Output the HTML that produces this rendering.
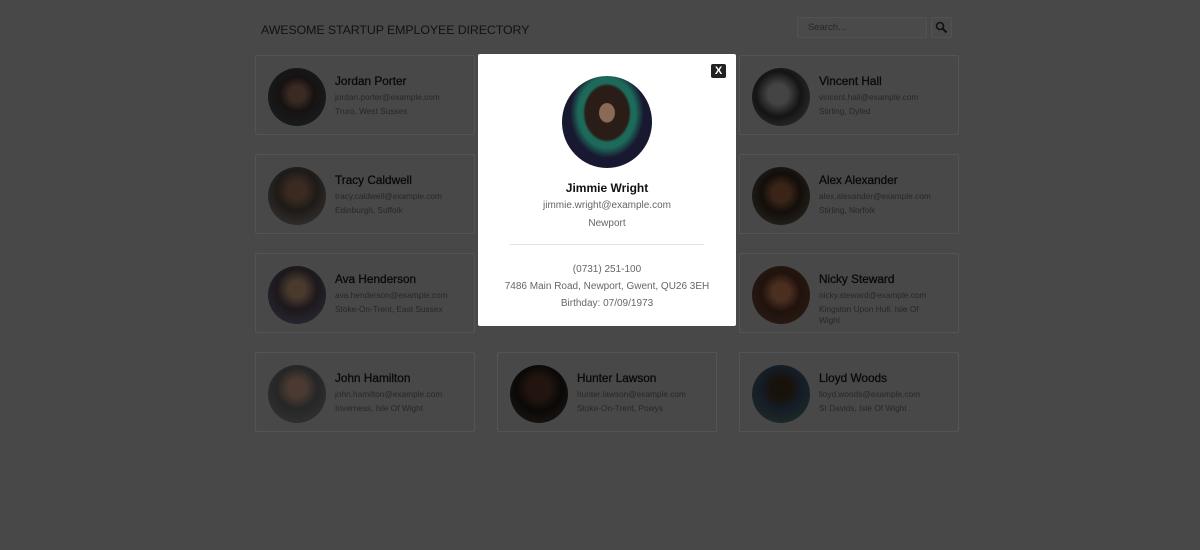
<!DOCTYPE html>
<html><head><meta charset="utf-8"><style>
*{margin:0;padding:0;box-sizing:border-box}
body{width:1200px;height:550px;background:#484848;font-family:"Liberation Sans",sans-serif;position:relative;overflow:hidden}
h1{position:absolute;left:261px;top:23px;font-size:12.4px;font-weight:normal;color:#111;letter-spacing:-.1px}
.search{position:absolute;left:797px;top:17px;width:130px;height:21px;border:1px solid #525252;background:#4a4a4a;border-radius:2px;font-size:9.5px;color:#262626;padding:4px 10px}
.sbtn{position:absolute;left:931px;top:17px;width:21px;height:21px;border:1px solid #525252;border-radius:2px;background:#4a4a4a}
.card{position:absolute;width:220px;height:80px;border:1px solid #545454;border-radius:2px;background:#484848}
.av{position:absolute;left:12px;top:12px;width:58px;height:58px;border-radius:50%}
.n{position:absolute;left:79px;top:18px;font-size:11.8px;color:#0a0a0a;white-space:nowrap;-webkit-text-stroke:.3px #0a0a0a}
.e{position:absolute;left:79px;top:36px;font-size:8.3px;color:#272727;white-space:nowrap}
.l{position:absolute;left:79px;top:50px;font-size:8.3px;color:#272727;width:120px;line-height:11px}
.modal{position:absolute;left:478px;top:54px;width:258px;height:272px;background:#fff;border-radius:2px;text-align:center}
.x{position:absolute;left:233px;top:10px;width:15px;height:14px;background:#222;border-radius:2px;color:#fff;font-size:11px;font-weight:bold;line-height:14px}
.big{position:absolute;left:84px;top:22px;width:90px;height:92px;border-radius:50%;background:radial-gradient(ellipse at 50% 40%,#8a6a55 0 12%,#2a1c16 13% 34%,#1d6a5a 38% 45%,#181830 58%),#222;overflow:hidden}
.m{position:absolute;left:0;width:258px;color:#666;font-size:10px}
</style></head><body>
<h1>AWESOME STARTUP EMPLOYEE DIRECTORY</h1>
<div class="search">Search...</div>
<div class="sbtn"><svg width="19" height="19" viewBox="0 0 19 19"><circle cx="8" cy="8" r="3.5" fill="none" stroke="#111" stroke-width="1.6"/><path d="M10.5 10.5l4 4" stroke="#111" stroke-width="2.2"/></svg></div>

<div class="card" style="left:255px;top:55px"><div class="av" style="background:radial-gradient(circle at 50% 45%,#3a2a22 0 18%,#161212 40%,#1a2222)"></div><div class="n">Jordan Porter</div><div class="e">jordan.porter@example.com</div><div class="l">Truro, West Sussex</div></div>
<div class="card" style="left:739px;top:55px"><div class="av" style="background:radial-gradient(circle at 45% 45%,#444 0 22%,#141414 50%,#3a3a3a)"></div><div class="n">Vincent Hall</div><div class="e">vincent.hall@example.com</div><div class="l">Stirling, Dyfed</div></div>
<div class="card" style="left:255px;top:154px"><div class="av" style="background:radial-gradient(circle at 50% 40%,#3a2a20 0 20%,#1e1a18 45%,#3a3a38)"></div><div class="n">Tracy Caldwell</div><div class="e">tracy.caldwell@example.com</div><div class="l">Edinburgh, Suffolk</div></div>
<div class="card" style="left:739px;top:154px"><div class="av" style="background:radial-gradient(circle at 50% 45%,#3a2418 0 20%,#120e0a 45%,#2e2e26)"></div><div class="n">Alex Alexander</div><div class="e">alex.alexander@example.com</div><div class="l">Stirling, Norfolk</div></div>
<div class="card" style="left:255px;top:253px"><div class="av" style="background:radial-gradient(circle at 50% 40%,#4a3a2e 0 18%,#1c181c 45%,#2e2e3a)"></div><div class="n">Ava Henderson</div><div class="e">ava.henderson@example.com</div><div class="l">Stoke-On-Trent, East Sussex</div></div>
<div class="card" style="left:739px;top:253px"><div class="av" style="background:radial-gradient(circle at 50% 45%,#4a2e20 0 20%,#20120c 45%,#2e2018)"></div><div class="n">Nicky Steward</div><div class="e">nicky.steward@example.com</div><div class="l">Kingston Upon Hull, Isle Of Wight</div></div>
<div class="card" style="left:255px;top:352px"><div class="av" style="background:radial-gradient(circle at 50% 40%,#4a3a32 0 20%,#262626 45%,#363636)"></div><div class="n">John Hamilton</div><div class="e">john.hamilton@example.com</div><div class="l">Inverness, Isle Of Wight</div></div>
<div class="card" style="left:497px;top:352px"><div class="av" style="background:radial-gradient(circle at 50% 40%,#22140e 0 25%,#0a0908 50%,#221a14)"></div><div class="n">Hunter Lawson</div><div class="e">hunter.lawson@example.com</div><div class="l">Stoke-On-Trent, Powys</div></div>
<div class="card" style="left:739px;top:352px"><div class="av" style="background:radial-gradient(circle at 50% 40%,#18120c 0 22%,#141c26 45%,#223026)"></div><div class="n">Lloyd Woods</div><div class="e">lloyd.woods@example.com</div><div class="l">St Davids, Isle Of Wight</div></div>

<div class="modal">
<div class="x">X</div>
<div class="big"></div>
<div class="m" style="top:127px;color:#111;font-size:12px;font-weight:bold">Jimmie Wright</div>
<div class="m" style="top:146px">jimmie.wright@example.com</div>
<div class="m" style="top:164px">Newport</div>
<div style="position:absolute;left:32px;top:190px;width:194px;border-top:1px solid #e2e2e2"></div>
<div class="m" style="top:210px">(0731) 251-100</div>
<div class="m" style="top:227px">7486 Main Road, Newport, Gwent, QU26 3EH</div>
<div class="m" style="top:244px">Birthday: 07/09/1973</div>
</div>
</body></html>
